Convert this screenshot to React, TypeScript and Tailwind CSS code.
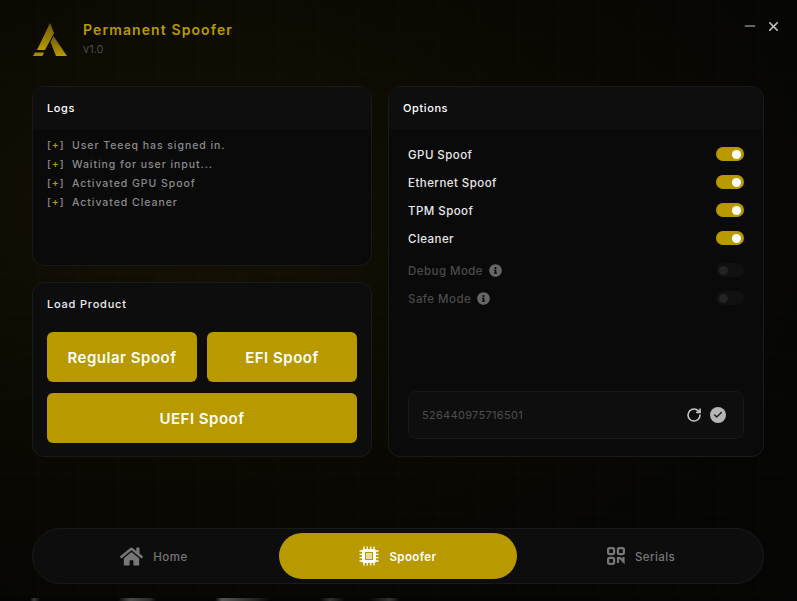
import { RotateCw, Check, Minus, X } from 'lucide-react';
import { FaHome, FaInfoCircle } from 'react-icons/fa';

const logs = ['User Teeeq has signed in.', 'Waiting for user input...', 'Activated GPU Spoof', 'Activated Cleaner'];
const opts = ['GPU Spoof', 'Ethernet Spoof', 'TPM Spoof', 'Cleaner'];

const Toggle = ({ on }: { on: boolean }) => (
    <div className={`w-7 h-3.5 mb-1 rounded-full flex items-center px-[3px] ${on ? 'bg-[#b89a00] justify-end' : 'bg-[#111112] justify-start'}`}>
        <div className={`w-[9px] h-[9px] rounded-full ${on ? 'bg-white' : 'bg-[#232323]'}`} />
    </div>
);

const Logo = () => (
    <svg width="35" height="34" viewBox="0 0 35 34">
        <defs>
            <linearGradient id="lg" x1="0" y1="0" x2="0" y2="1">
                <stop offset="0" stopColor="#6e5c08" />
                <stop offset="1" stopColor="#b89a00" />
            </linearGradient>
        </defs>
        <path d="M17 0 L21 10 L12 27 L4 27 Z" fill="url(#lg)" />
        <path d="M0 33 L2 29.5 L11 29.5 L9.5 33 Z" fill="#a88d02" />
        <path d="M20.5 13 L34 33 L23 33 L17.5 19 Z" fill="url(#lg)" />
    </svg>
);

const ChipIcon = () => (
    <svg width="20" height="20" viewBox="0 0 20 20" fill="none">
        <path d="M5 0.5V19.5M8.3 0.5V19.5M11.7 0.5V19.5M15 0.5V19.5M0.5 5H19.5M0.5 8.3H19.5M0.5 11.7H19.5M0.5 15H19.5" stroke="white" strokeWidth="1.3" />
        <rect x="3" y="3" width="14" height="14" rx="2" fill="white" />
        <rect x="6" y="6" width="8" height="8" fill="#b89a00" />
        <rect x="7" y="7" width="6" height="6" fill="#e6dca0" />
    </svg>
);

const QrIcon = () => (
    <svg width="18" height="18" viewBox="0 0 18 18" fill="none" stroke="#777" strokeWidth="2.2">
        <rect x="1.1" y="1.1" width="6" height="6" rx="1.6" />
        <rect x="10.9" y="1.1" width="6" height="6" rx="1.6" />
        <rect x="1.1" y="10.9" width="6" height="6" rx="1.6" />
        <path d="M11 16 V11 H13 L16.5 14.5 V10" />
    </svg>
);

export default function App() {
    return (
        <div className="w-[797px] h-[601px] overflow-hidden bg-[linear-gradient(90deg,#050505_30px,#3a3a3a_34px,#050505_40px,#050505_118px,#4a4a4a_130px,#2a2a2a_150px,#050505_156px,#050505_215px,#555_222px,#222_256px,#050505_270px,#050505_320px,#333_330px,#050505_345px,#050505_370px,#333_390px,#050505_400px,#050505_790px)] font-['Inter',sans-serif]">
            <div className="h-[598px] rounded-b-xl bg-[#060606] bg-[linear-gradient(rgba(255,255,255,0.01)_1px,transparent_1px),linear-gradient(90deg,rgba(255,255,255,0.01)_1px,transparent_1px),radial-gradient(ellipse_at_25%_35%,#151103_0%,#0b0902_45%,#050504_85%)] bg-[size:40px_40px,40px_40px,100%_100%] bg-[position:38px_33px,38px_33px,0_0] flex flex-col pl-8 pr-[33px]">
                {/* Header */}
                <div className="h-[86px] flex items-start justify-between">
                    <div className="flex items-center gap-[15px] pt-[23px] pl-px">
                        <Logo />
                        <div>
                            <p className="text-sm font-semibold text-[#b89a00] tracking-[1.1px] leading-4 -mt-[3px]">Permanent Spoofer</p>
                            <p className="mt-[5px] text-[11px] text-[#4c4c4c] leading-3">v1.0</p>
                        </div>
                    </div>
                    <div className="flex items-center gap-2 pt-[18px] mr-[-17px] text-[#c4c4c4]">
                        <Minus size={16} strokeWidth={1.8} />
                        <X size={15} strokeWidth={2.6} />
                    </div>
                </div>

                <div className="flex gap-4">
                    <div className="w-[340px] flex flex-col gap-4">
                        {/* Logs */}
                        <div className="h-[180px] rounded-xl border border-[#1a1a1a] bg-[#0a0a0b] overflow-hidden">
                            <div className="h-[42px] px-3.5 flex items-center bg-[#0e0e0f] text-[11px] font-medium tracking-[0.6px] text-white">Logs</div>
                            <div className="pt-[7px] px-3.5 flex flex-col">
                                {logs.map((l) => (
                                    <div key={l} className="h-[19px] flex items-center gap-2.5 text-[10.5px] font-medium tracking-[0.95px] text-[#8a8a8a]">
                                        <span className="w-[15px] whitespace-nowrap">[<span className="text-[#b89a00]">+</span>]</span>
                                        <span>{l}</span>
                                    </div>
                                ))}
                            </div>
                        </div>
                        {/* Load Product */}
                        <div className="h-[175px] rounded-xl border border-[#1a1a1a] bg-[#0d0d0e] p-3.5 pt-0">
                            <div className="h-[42px] flex items-center text-[11px] font-medium tracking-[0.8px] text-[#eee]">Load Product</div>
                            <div className="mt-[7px] grid grid-cols-2 gap-x-2.5 gap-y-[11px] tracking-[0.5px]">
                                <button className="h-[50px] pt-0.5 rounded-md bg-[#b89a00] text-[15px] font-semibold text-white">Regular Spoof</button>
                                <button className="h-[50px] pt-0.5 rounded-md bg-[#b89a00] text-[15px] font-semibold text-white">EFI Spoof</button>
                                <button className="col-span-2 h-[50px] pt-0.5 rounded-md bg-[#b89a00] text-[15px] font-semibold text-white">UEFI Spoof</button>
                            </div>
                        </div>
                    </div>

                    {/* Options */}
                    <div className="w-[376px] h-[371px] rounded-xl border border-[#1a1a1a] bg-[#0a0a0b] overflow-hidden flex flex-col">
                        <div className="h-[42px] px-3.5 flex items-center bg-[#0e0e0f] text-[11px] font-medium tracking-[0.6px] text-white">Options</div>
                        <div className="pt-[13px] px-[19px] flex-1 flex flex-col">
                            {opts.map((o) => (
                                <div key={o} className="h-7 flex items-center justify-between text-[11.5px] font-medium tracking-[0.45px] text-[#e8e8e8]">
                                    <span>{o}</span>
                                    <Toggle on />
                                </div>
                            ))}
                            <div className="mt-1 h-7 flex items-center justify-between text-[11.5px] font-medium tracking-[0.45px] text-[#4a4a4a]">
                                <span className="flex items-center gap-1.5">Debug Mode <FaInfoCircle size={13} className="text-[#666] -mt-1" /></span>
                                <Toggle on={false} />
                            </div>
                            <div className="h-7 flex items-center justify-between text-[11.5px] font-medium tracking-[0.45px] text-[#4a4a4a]">
                                <span className="flex items-center gap-1.5">Safe Mode <FaInfoCircle size={13} className="text-[#666] -mt-1" /></span>
                                <Toggle on={false} />
                            </div>
                            <div className="mt-auto mb-[17px] h-12 rounded-lg border border-[#1a1a1a] bg-[#0e0e0f] pl-[13px] pr-3.5 flex items-center justify-between">
                                <span className="text-[11px] text-[#4e4e4e] tracking-[0.3px]">526440975716501</span>
                                <div className="flex items-center gap-2 mr-[3px]">
                                    <RotateCw size={16} strokeWidth={2.4} className="text-[#c4c4c4]" />
                                    <div className="w-4 h-4 rounded-full bg-[#b5b5b5] flex items-center justify-center">
                                        <Check size={10} strokeWidth={3.5} className="text-[#222]" />
                                    </div>
                                </div>
                            </div>
                        </div>
                    </div>
                </div>

                {/* Bottom nav */}
                <div className="mt-[71px] h-14 rounded-[28px] border border-[#1a1a1a] bg-[#0d0d0e] grid grid-cols-3 items-center px-[5px]">
                    <div className="pr-2 flex items-center justify-center gap-[10px] text-[11.5px] font-medium tracking-[0.45px] text-[#777]">
                        <FaHome size={23} className="mt-px" />
                        <span className="mt-1">Home</span>
                    </div>
                    <div className="h-[46px] w-[238px] justify-self-center rounded-[23px] bg-[#b89a00] flex items-center justify-center gap-2.5 text-[11.5px] font-semibold tracking-[0.4px] text-white">
                        <ChipIcon />
                        <span className="mt-1">Spoofer</span>
                    </div>
                    <div className="pl-1.5 flex items-center justify-center gap-2.5 text-[11.5px] font-medium tracking-[0.4px] text-[#777]">
                        <QrIcon />
                        <span className="mt-1">Serials</span>
                    </div>
                </div>
            </div>
        </div>
    );
}
